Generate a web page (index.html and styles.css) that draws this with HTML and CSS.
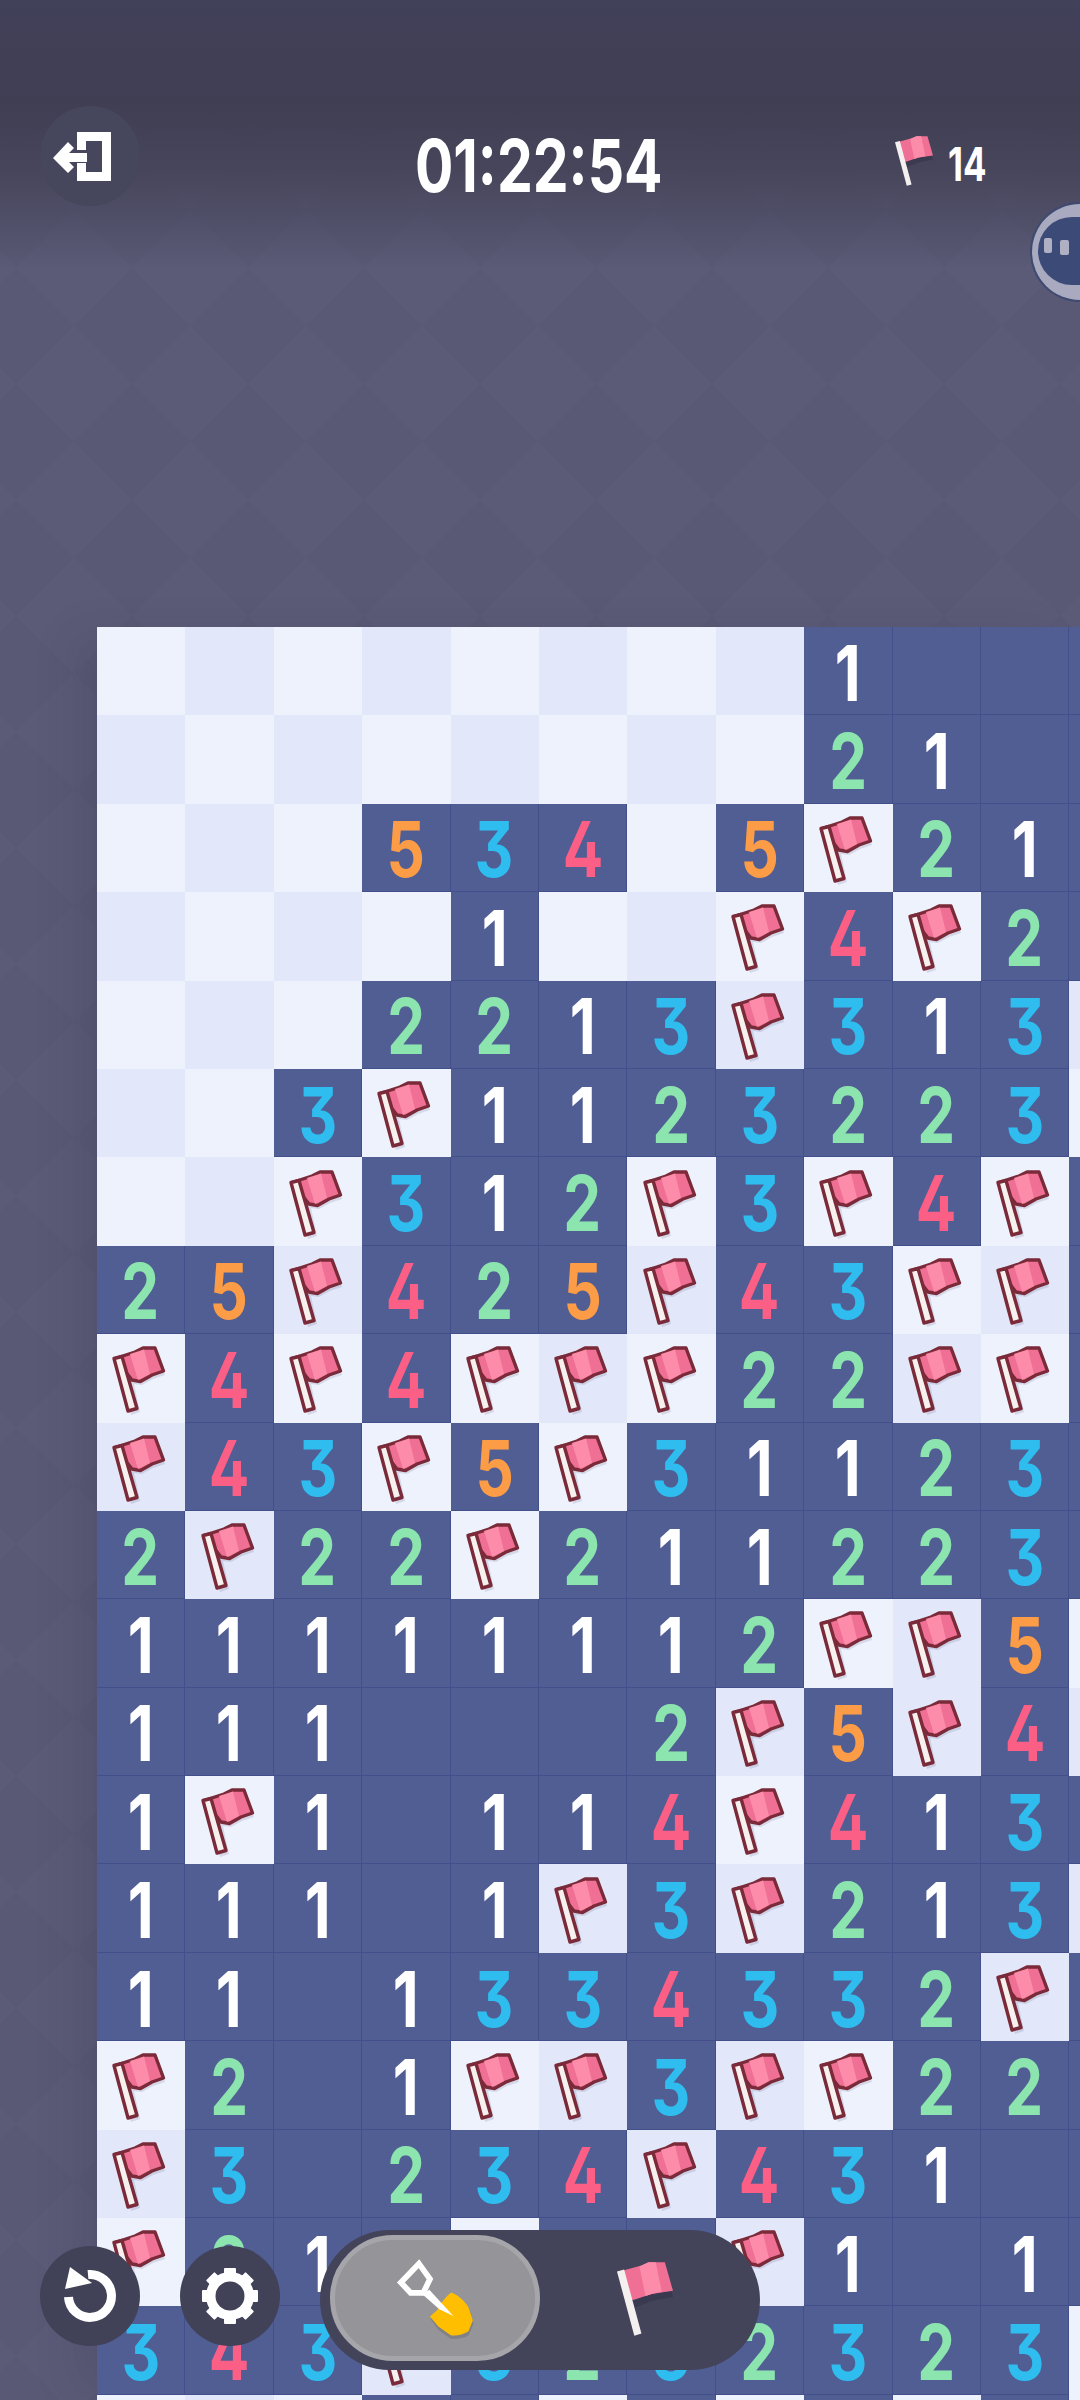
FILE: index.html
```html
<!DOCTYPE html>
<html lang="en">
<head>
    <meta charset="UTF-8">
    <meta name="viewport" content="width=device-width, initial-scale=1.0">
    <title>Minesweeper</title>
    <link rel="stylesheet" href="styles.css">
</head>
<body>
    <svg class="defs" width="0" height="0">
        <defs>
            <g id="flagCell">
                <path d="M20 28 L38 21 L47 17 L58 16 L67 39 L55 43 L44 49 L36 48 L42 76 L33 79 Z" fill="#3a3f70" opacity=".14" transform="translate(1 2)"/>
                <path d="M18 24.500 L38 18 L46 14 L58 14 L66.500 37 L55 41 L43.500 47.500 L35 46 Z" fill="#ef7094" stroke="#7a2a38" stroke-width="3.400" stroke-linejoin="round"/>
                <path d="M33 20 L47 15.500 L53 40 L41 46 Z" fill="#fc8ca9"/>
                <path d="M17 24.500 L25 22.500 L40 74.500 L31 77 Z" fill="#f6f1ef" stroke="#7a2a38" stroke-width="3.400" stroke-linejoin="round"/>
            </g>
            <g id="flagPlain">
                <path d="M6 10 L24 3 L31 0 L47 0 L55 30 L34 34 L16 41 L13 40 Z" fill="#33334a" opacity=".6" transform="translate(0 4)"/>
                <path d="M6 8 L24 3 L31 0 L47 0 L55 28 L34 31 L16 37 L13 36 Z" fill="#ef7094"/>
                <path d="M22 4 L31 0 L38 0 L44 29 L34 31 L28 33 Z" fill="#fc8ca9"/>
                <path d="M0 9 L7 7 L24 70 L17 72 Z" fill="#f4f0f0"/>
            </g>
        </defs>
    </svg>

    <header class="hud">
        <button class="round-btn exit-btn">
            <svg width="100" height="100" viewBox="40 106 100 100">
                <path d="M77 132 H111 V181 H77 V163 H86 V172 H102 V141 H86 V150 H77 Z" fill="#fff"/>
                <path d="M53 158 L68 142 L74 148 L69 153 H87 V162 H69 L74 167 L68 173 Z" fill="#fff"/>
            </svg>
        </button>
        <div class="timer"><span>01:22:54</span></div>
        <div class="flag-count">
            <svg width="38" height="50" viewBox="0 0 55 72"><use href="#flagPlain"/></svg>
            <span>14</span>
        </div>
    </header>

    <main class="board">
        <div class="c a"></div><div class="c b"></div><div class="c a"></div><div class="c b"></div><div class="c a"></div><div class="c b"></div><div class="c a"></div><div class="c b"></div><div class="c d n1"><b>1</b></div><div class="c d"></div><div class="c d"></div><div class="c d"></div>
        <div class="c b"></div><div class="c a"></div><div class="c b"></div><div class="c a"></div><div class="c b"></div><div class="c a"></div><div class="c b"></div><div class="c a"></div><div class="c d n2"><b>2</b></div><div class="c d n1"><b>1</b></div><div class="c d"></div><div class="c d"></div>
        <div class="c a"></div><div class="c b"></div><div class="c a"></div><div class="c d n5"><b>5</b></div><div class="c d n3"><b>3</b></div><div class="c d n4"><b>4</b></div><div class="c a"></div><div class="c d n5"><b>5</b></div><div class="c a"><svg viewBox="0 0 88 88"><use href="#flagCell"/></svg></div><div class="c d n2"><b>2</b></div><div class="c d n1"><b>1</b></div><div class="c d"></div>
        <div class="c b"></div><div class="c a"></div><div class="c b"></div><div class="c a"></div><div class="c d n1"><b>1</b></div><div class="c a"></div><div class="c b"></div><div class="c a"><svg viewBox="0 0 88 88"><use href="#flagCell"/></svg></div><div class="c d n4"><b>4</b></div><div class="c a"><svg viewBox="0 0 88 88"><use href="#flagCell"/></svg></div><div class="c d n2"><b>2</b></div><div class="c d"></div>
        <div class="c a"></div><div class="c b"></div><div class="c a"></div><div class="c d n2"><b>2</b></div><div class="c d n2"><b>2</b></div><div class="c d n1"><b>1</b></div><div class="c d n3"><b>3</b></div><div class="c b"><svg viewBox="0 0 88 88"><use href="#flagCell"/></svg></div><div class="c d n3"><b>3</b></div><div class="c d n1"><b>1</b></div><div class="c d n3"><b>3</b></div><div class="c b"></div>
        <div class="c b"></div><div class="c a"></div><div class="c d n3"><b>3</b></div><div class="c a"><svg viewBox="0 0 88 88"><use href="#flagCell"/></svg></div><div class="c d n1"><b>1</b></div><div class="c d n1"><b>1</b></div><div class="c d n2"><b>2</b></div><div class="c d n3"><b>3</b></div><div class="c d n2"><b>2</b></div><div class="c d n2"><b>2</b></div><div class="c d n3"><b>3</b></div><div class="c a"></div>
        <div class="c a"></div><div class="c b"></div><div class="c a"><svg viewBox="0 0 88 88"><use href="#flagCell"/></svg></div><div class="c d n3"><b>3</b></div><div class="c d n1"><b>1</b></div><div class="c d n2"><b>2</b></div><div class="c a"><svg viewBox="0 0 88 88"><use href="#flagCell"/></svg></div><div class="c d n3"><b>3</b></div><div class="c a"><svg viewBox="0 0 88 88"><use href="#flagCell"/></svg></div><div class="c d n4"><b>4</b></div><div class="c a"><svg viewBox="0 0 88 88"><use href="#flagCell"/></svg></div><div class="c d"></div>
        <div class="c d n2"><b>2</b></div><div class="c d n5"><b>5</b></div><div class="c b"><svg viewBox="0 0 88 88"><use href="#flagCell"/></svg></div><div class="c d n4"><b>4</b></div><div class="c d n2"><b>2</b></div><div class="c d n5"><b>5</b></div><div class="c b"><svg viewBox="0 0 88 88"><use href="#flagCell"/></svg></div><div class="c d n4"><b>4</b></div><div class="c d n3"><b>3</b></div><div class="c a"><svg viewBox="0 0 88 88"><use href="#flagCell"/></svg></div><div class="c b"><svg viewBox="0 0 88 88"><use href="#flagCell"/></svg></div><div class="c d"></div>
        <div class="c a"><svg viewBox="0 0 88 88"><use href="#flagCell"/></svg></div><div class="c d n4"><b>4</b></div><div class="c a"><svg viewBox="0 0 88 88"><use href="#flagCell"/></svg></div><div class="c d n4"><b>4</b></div><div class="c a"><svg viewBox="0 0 88 88"><use href="#flagCell"/></svg></div><div class="c b"><svg viewBox="0 0 88 88"><use href="#flagCell"/></svg></div><div class="c a"><svg viewBox="0 0 88 88"><use href="#flagCell"/></svg></div><div class="c d n2"><b>2</b></div><div class="c d n2"><b>2</b></div><div class="c b"><svg viewBox="0 0 88 88"><use href="#flagCell"/></svg></div><div class="c a"><svg viewBox="0 0 88 88"><use href="#flagCell"/></svg></div><div class="c d"></div>
        <div class="c b"><svg viewBox="0 0 88 88"><use href="#flagCell"/></svg></div><div class="c d n4"><b>4</b></div><div class="c d n3"><b>3</b></div><div class="c a"><svg viewBox="0 0 88 88"><use href="#flagCell"/></svg></div><div class="c d n5"><b>5</b></div><div class="c a"><svg viewBox="0 0 88 88"><use href="#flagCell"/></svg></div><div class="c d n3"><b>3</b></div><div class="c d n1"><b>1</b></div><div class="c d n1"><b>1</b></div><div class="c d n2"><b>2</b></div><div class="c d n3"><b>3</b></div><div class="c d"></div>
        <div class="c d n2"><b>2</b></div><div class="c b"><svg viewBox="0 0 88 88"><use href="#flagCell"/></svg></div><div class="c d n2"><b>2</b></div><div class="c d n2"><b>2</b></div><div class="c a"><svg viewBox="0 0 88 88"><use href="#flagCell"/></svg></div><div class="c d n2"><b>2</b></div><div class="c d n1"><b>1</b></div><div class="c d n1"><b>1</b></div><div class="c d n2"><b>2</b></div><div class="c d n2"><b>2</b></div><div class="c d n3"><b>3</b></div><div class="c d"></div>
        <div class="c d n1"><b>1</b></div><div class="c d n1"><b>1</b></div><div class="c d n1"><b>1</b></div><div class="c d n1"><b>1</b></div><div class="c d n1"><b>1</b></div><div class="c d n1"><b>1</b></div><div class="c d n1"><b>1</b></div><div class="c d n2"><b>2</b></div><div class="c a"><svg viewBox="0 0 88 88"><use href="#flagCell"/></svg></div><div class="c b"><svg viewBox="0 0 88 88"><use href="#flagCell"/></svg></div><div class="c d n5"><b>5</b></div><div class="c a"></div>
        <div class="c d n1"><b>1</b></div><div class="c d n1"><b>1</b></div><div class="c d n1"><b>1</b></div><div class="c d"></div><div class="c d"></div><div class="c d"></div><div class="c d n2"><b>2</b></div><div class="c b"><svg viewBox="0 0 88 88"><use href="#flagCell"/></svg></div><div class="c d n5"><b>5</b></div><div class="c b"><svg viewBox="0 0 88 88"><use href="#flagCell"/></svg></div><div class="c d n4"><b>4</b></div><div class="c b"></div>
        <div class="c d n1"><b>1</b></div><div class="c a"><svg viewBox="0 0 88 88"><use href="#flagCell"/></svg></div><div class="c d n1"><b>1</b></div><div class="c d"></div><div class="c d n1"><b>1</b></div><div class="c d n1"><b>1</b></div><div class="c d n4"><b>4</b></div><div class="c a"><svg viewBox="0 0 88 88"><use href="#flagCell"/></svg></div><div class="c d n4"><b>4</b></div><div class="c d n1"><b>1</b></div><div class="c d n3"><b>3</b></div><div class="c d"></div>
        <div class="c d n1"><b>1</b></div><div class="c d n1"><b>1</b></div><div class="c d n1"><b>1</b></div><div class="c d"></div><div class="c d n1"><b>1</b></div><div class="c b"><svg viewBox="0 0 88 88"><use href="#flagCell"/></svg></div><div class="c d n3"><b>3</b></div><div class="c b"><svg viewBox="0 0 88 88"><use href="#flagCell"/></svg></div><div class="c d n2"><b>2</b></div><div class="c d n1"><b>1</b></div><div class="c d n3"><b>3</b></div><div class="c b"></div>
        <div class="c d n1"><b>1</b></div><div class="c d n1"><b>1</b></div><div class="c d"></div><div class="c d n1"><b>1</b></div><div class="c d n3"><b>3</b></div><div class="c d n3"><b>3</b></div><div class="c d n4"><b>4</b></div><div class="c d n3"><b>3</b></div><div class="c d n3"><b>3</b></div><div class="c d n2"><b>2</b></div><div class="c b"><svg viewBox="0 0 88 88"><use href="#flagCell"/></svg></div><div class="c d"></div>
        <div class="c a"><svg viewBox="0 0 88 88"><use href="#flagCell"/></svg></div><div class="c d n2"><b>2</b></div><div class="c d"></div><div class="c d n1"><b>1</b></div><div class="c a"><svg viewBox="0 0 88 88"><use href="#flagCell"/></svg></div><div class="c b"><svg viewBox="0 0 88 88"><use href="#flagCell"/></svg></div><div class="c d n3"><b>3</b></div><div class="c b"><svg viewBox="0 0 88 88"><use href="#flagCell"/></svg></div><div class="c a"><svg viewBox="0 0 88 88"><use href="#flagCell"/></svg></div><div class="c d n2"><b>2</b></div><div class="c d n2"><b>2</b></div><div class="c d"></div>
        <div class="c b"><svg viewBox="0 0 88 88"><use href="#flagCell"/></svg></div><div class="c d n3"><b>3</b></div><div class="c d"></div><div class="c d n2"><b>2</b></div><div class="c d n3"><b>3</b></div><div class="c d n4"><b>4</b></div><div class="c b"><svg viewBox="0 0 88 88"><use href="#flagCell"/></svg></div><div class="c d n4"><b>4</b></div><div class="c d n3"><b>3</b></div><div class="c d n1"><b>1</b></div><div class="c d"></div><div class="c d"></div>
        <div class="c a"><svg viewBox="0 0 88 88"><use href="#flagCell"/></svg></div><div class="c d n2"><b>2</b></div><div class="c d n1"><b>1</b></div><div class="c d"></div><div class="c a"></div><div class="c d"></div><div class="c d"></div><div class="c b"><svg viewBox="0 0 88 88"><use href="#flagCell"/></svg></div><div class="c d n1"><b>1</b></div><div class="c d"></div><div class="c d n1"><b>1</b></div><div class="c d"></div>
        <div class="c d n3"><b>3</b></div><div class="c d n4"><b>4</b></div><div class="c d n3"><b>3</b></div><div class="c b"><svg viewBox="0 0 88 88"><use href="#flagCell"/></svg></div><div class="c d n3"><b>3</b></div><div class="c d n2"><b>2</b></div><div class="c d n3"><b>3</b></div><div class="c d n2"><b>2</b></div><div class="c d n3"><b>3</b></div><div class="c d n2"><b>2</b></div><div class="c d n3"><b>3</b></div><div class="c a"></div>
        <div class="c a"></div><div class="c b"></div><div class="c a"></div><div class="c d"></div><div class="c d"></div><div class="c a"></div><div class="c d"></div><div class="c a"></div><div class="c d"></div><div class="c a"></div><div class="c d"></div><div class="c a"></div>
    </main>

    <button class="round-btn undo-btn">
        <svg width="60" height="60" viewBox="0 0 60 60">
            <path d="M28 8.500 A 21.500 21.500 0 1 1 8.500 31" fill="none" stroke="#fff" stroke-width="9"/>
            <path d="M10 1 L32 17 L5 23 Z" fill="#fff"/>
        </svg>
    </button>
    <button class="round-btn gear-btn">
        <svg width="60" height="60" viewBox="0 0 60 60">
            <g fill="#fff">
                <rect x="24" y="2" width="12" height="56" rx="1"/>
                <rect x="24" y="2" width="12" height="56" rx="1" transform="rotate(45 30 30)"/>
                <rect x="24" y="2" width="12" height="56" rx="1" transform="rotate(90 30 30)"/>
                <rect x="24" y="2" width="12" height="56" rx="1" transform="rotate(135 30 30)"/>
            </g>
            <circle cx="30" cy="30" r="19" fill="none" stroke="#fff" stroke-width="10"/>
            <circle cx="30" cy="30" r="14.500" fill="#414157"/>
        </svg>
    </button>

    <div class="mode-toggle">
        <div class="mode mode-active">
            <svg width="84" height="82" viewBox="290 140 250 245">
                <path d="M402 326 L425 305 C435 285 450 262 464 255 C490 265 515 285 522 305 L530 340 L516 374 C500 384 480 386 462 384 L425 358 Z" fill="#000" opacity=".12"/>
                <path d="M400 318 L422 298 C432 278 450 255 464 246 C490 256 512 280 518 298 L528 330 L515 362 C500 372 480 376 462 374 L425 348 Z" fill="#ffbe00"/>
                <path d="M367 160 L400 206 L380 247 L342 247 L313 216 Z" fill="none" stroke="#fff" stroke-width="17" stroke-linejoin="miter"/>
                <path d="M398 238 L470 316 L428 296 L378 252 Z" fill="#fff"/>
            </svg>
        </div>
        <div class="mode">
            <svg width="56" height="74" viewBox="0 0 55 72"><use href="#flagPlain"/></svg>
        </div>
    </div>

    <div class="assistant">
        <div class="assistant-face">
            <span class="eye"></span>
            <span class="eye eye-low"></span>
        </div>
    </div>
</body>
</html>
```

FILE: styles.css
```css
* {
    box-sizing: border-box;
}
html, body {
    margin: 0;
    padding: 0;
}
body {
    position: relative;
    width: 1080px;
    height: 2400px;
    overflow: hidden;
    font-family: Inter, "Liberation Sans", sans-serif;
    background-color: #5b5b78;
    background-image:
        linear-gradient(to bottom, #42415a 0, #3f3e53 100px, rgba(68, 67, 88, 0.9) 170px, rgba(92, 92, 121, 0) 270px),
        linear-gradient(45deg, #595975 25%, transparent 25%),
        linear-gradient(-45deg, #595975 25%, transparent 25%),
        linear-gradient(45deg, transparent 75%, #595975 75%),
        linear-gradient(-45deg, transparent 75%, #595975 75%);
    background-size: auto, 116px 116px, 116px 116px, 116px 116px, 116px 116px;
    background-position: 0 0, 16px 93px, 16px 93px, 16px 93px, 16px 93px;
}
.defs {
    display: block;
    position: absolute;
}
button {
    border: none;
    padding: 0;
}
.round-btn {
    display: flex;
    align-items: center;
    justify-content: center;
    width: 100px;
    height: 100px;
    border-radius: 50%;
    background: #414157;
}

.hud {
    display: flex;
    align-items: flex-start;
    height: 627px;
    padding: 106px 0 0 40px;
    color: white;
}
.exit-btn {
    flex: none;
    background: #46465c;
}
.timer {
    width: 500px;
    margin: 23px 0 0 149px;
    text-align: center;
    font-size: 73px;
    line-height: 1;
    font-weight: 700;
}
.timer span {
    display: inline-block;
    transform: scaleX(0.78);
}
.flag-count {
    display: flex;
    align-items: flex-start;
    gap: 15px;
    margin: 30px 0 0 106px;
    font-size: 47px;
    line-height: 1;
    font-weight: 700;
}
.flag-count span {
    display: inline-block;
    margin-top: 4px;
    transform: scaleX(0.74);
    transform-origin: left center;
}

.board {
    display: grid;
    grid-template-columns: repeat(12, 88.4px);
    grid-auto-rows: 88.4px;
    width: 983px;
    height: 1773px;
    margin-left: 97px;
    overflow: hidden;
    box-shadow: -30px 0 40px -10px rgba(40, 40, 70, 0.15);
}
.c {
    display: flex;
    align-items: center;
    justify-content: center;
}
.c svg {
    width: 88px;
    height: 88px;
    display: block;
}
.a {
    background: #eef2fd;
}
.b {
    background: #e2e7f9;
}
.d {
    background: #505e94;
    border-right: 1px solid #424f8b;
    border-bottom: 1px solid #424f8b;
}
.c b {
    display: inline-block;
    margin-top: 5px;
    font-size: 77px;
    line-height: 1;
    font-weight: 700;
    font-feature-settings: "cv02", "cv09";
    transform: scaleX(0.78);
}
.n1 { color: #ffffff; }
.n2 { color: #8ce4ae; }
.n3 { color: #2fbcee; }
.n4 { color: #fb5f85; }
.n5 { color: #fd9c46; }

/* things floating over the board */
.undo-btn, .gear-btn {
    position: absolute;
    top: 2246px;
}
.undo-btn {
    left: 40px;
}
.gear-btn {
    left: 180px;
}
.mode-toggle {
    position: absolute;
    left: 320px;
    top: 2230px;
    display: flex;
    width: 440px;
    height: 140px;
    padding: 5px 10px 9px;
    border-radius: 70px;
    background: #43435a;
}
.mode {
    display: flex;
    align-items: center;
    justify-content: center;
    width: 210px;
}
.mode + .mode svg {
    margin: 2px 0 0 0;
}
.mode-active {
    border: 5px solid #a5a5aa;
    border-radius: 63px;
    background: #949499;
}
.assistant {
    position: absolute;
    left: 1030px;
    top: 202px;
    width: 50px;
    height: 100px;
    padding: 13px 0 0 6px;
    border: 2px solid #3f4a70;
    border-right: none;
    border-radius: 50px 0 0 50px;
    background: #a9a9bf;
}
.assistant-face {
    position: relative;
    width: 42px;
    height: 68px;
    border-radius: 36px 0 0 36px;
    background: #3c4a78;
}
.eye {
    position: absolute;
    left: 6px;
    top: 21px;
    width: 8px;
    height: 15px;
    border-radius: 2px;
    background: #b0b0c4;
}
.eye-low {
    left: 22px;
    top: 23px;
    width: 9px;
}
```
